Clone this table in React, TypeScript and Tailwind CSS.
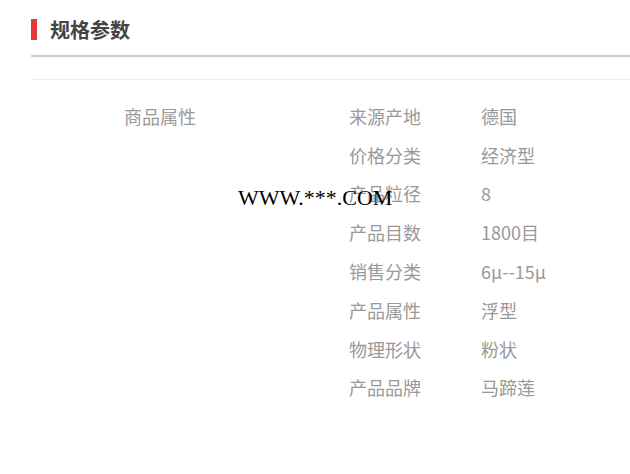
const rows: [string, string][] = [
  ["来源产地", "德国"],
  ["价格分类", "经济型"],
  ["产品粒径", "8"],
  ["产品目数", "1800目"],
  ["销售分类", "6μ--15μ"],
  ["产品属性", "浮型"],
  ["物理形状", "粉状"],
  ["产品品牌", "马蹄莲"],
];

export default function App() {
  return (
    <div
      className="relative w-[630px] h-[474px] bg-white overflow-hidden"
      style={{ fontFamily: '"Microsoft YaHei", "Noto Sans CJK SC", sans-serif' }}
    >
      <div className="pl-[31px]">
        <div className="flex items-center pt-[19px] pb-[15px]">
          <span className="block w-[6px] h-[21px] bg-[#e4393c]" />
          <h2 className="ml-[13px] text-[20px] font-bold text-[#444] leading-[21px]">规格参数</h2>
        </div>
        <div className="h-[2px] bg-[#cccccc]" />
        <div className="h-[22px]" />
        <div className="h-px bg-[#eeeeee]" />

        <div className="flex pt-[17px] text-[18px] text-[#999]">
          <div className="w-[318px] pl-[93px]">
            <div className="h-[39px] flex items-center">商品属性</div>
          </div>
          <div className="flex flex-col">
            {rows.map(([k, v]) => (
              <div key={k} className="flex h-[38.8px] items-center">
                <span className="w-[132px]">{k}</span>
                <span>{v}</span>
              </div>
            ))}
          </div>
        </div>
      </div>

      <div
        className="absolute left-[238px] top-[187px] text-[22px] leading-none text-black"
        style={{ fontFamily: '"Liberation Serif", serif' }}
      >
        WWW.***.COM
      </div>
    </div>
  );
}
